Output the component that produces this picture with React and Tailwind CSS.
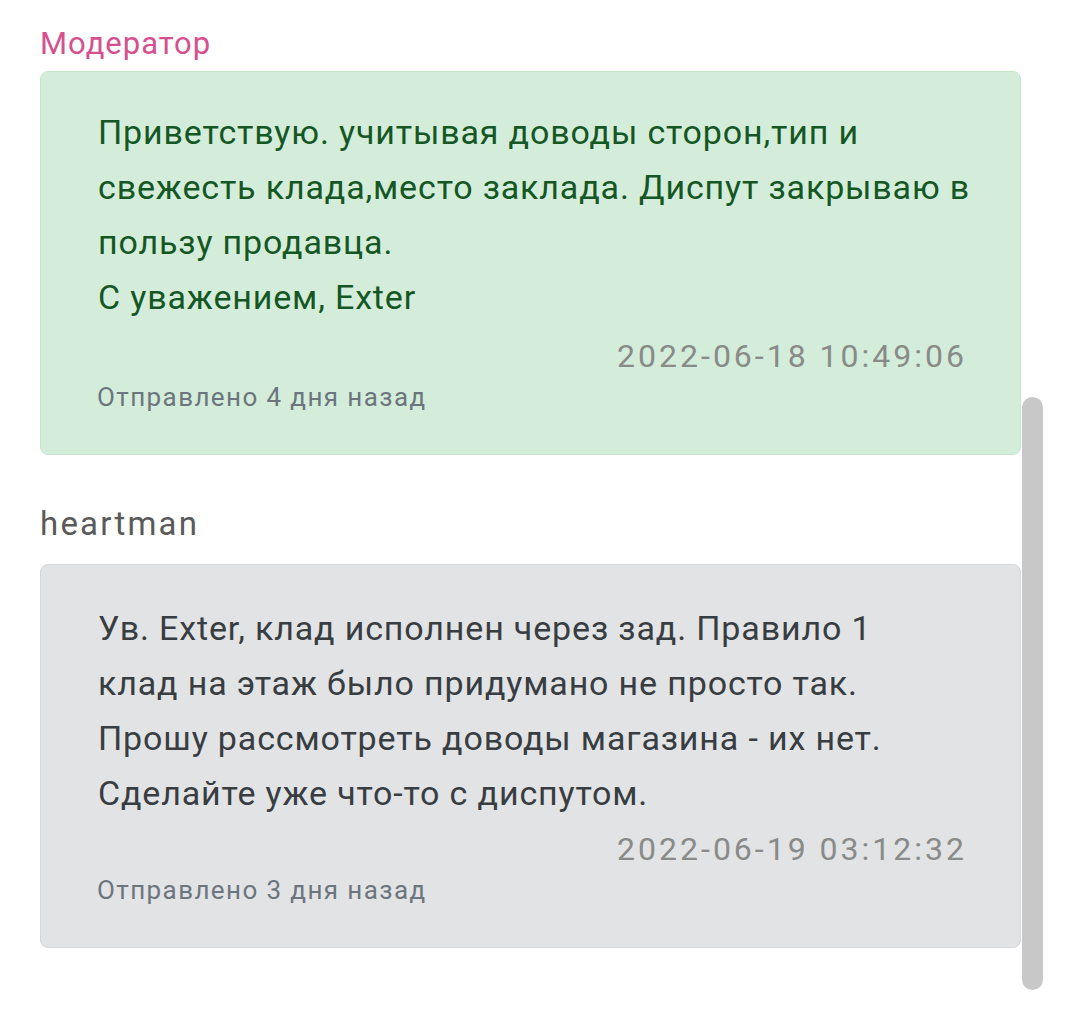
import React from 'react';

const messages = [
  {
    author: "Модератор",
    authorClass: "text-[31px] text-[#d6508f] tracking-[1px]",
    boxClass: "mt-[7px] bg-[#d4edda] border-[#c3e6cb] text-[#155724] pt-[33px]",
    lines: [
      "Приветствую. учитывая доводы сторон,тип и",
      "свежесть клада,место заклада. Диспут закрываю в",
      "пользу продавца.",
      "С уважением, Exter",
    ],
    dateClass: "mt-[6px]",
    date: "2022-06-18 10:49:06",
    sent: "Отправлено 4 дня назад",
  },
  {
    author: "heartman",
    authorClass: "text-[33px] text-[#5a5a5a] tracking-[2.2px]",
    boxClass: "mt-[20px] bg-[#e2e3e5] border-[#d6d8db] text-[#383d41] pt-[36px]",
    lines: [
      "Ув. Exter, клад исполнен через зад. Правило 1",
      "клад на этаж было придумано не просто так.",
      "Прошу рассмотреть доводы магазина - их нет.",
      "Сделайте уже что-то с диспутом.",
    ],
    dateClass: "mt-[3px]",
    date: "2022-06-19 03:12:32",
    sent: "Отправлено 3 дня назад",
  },
];

const App = () => {
  return (
    <div className="relative w-[1080px] h-[1029px] bg-white overflow-hidden font-['Roboto','Noto_Sans',sans-serif]">
      <div className="pl-[40px] pr-[59px] pt-[24px] flex flex-col">
        {messages.map((m, i) => (
          <div key={i} className={i > 0 ? "mt-[49px]" : ""}>
            <div className={`leading-[40px] ${m.authorClass}`}>{m.author}</div>
            <div className={`border rounded-[8px] pl-[57px] pr-[56px] pb-[41px] ${m.boxClass}`}>
              <div className="text-[34px] leading-[55px] tracking-[0.85px] whitespace-nowrap">
                {m.lines.map((l, j) => (
                  <div key={j}>{l}</div>
                ))}
              </div>
              <div className={`text-right text-[32px] leading-[50px] tracking-[3px] -mr-[3px] text-[#888b88] ${m.dateClass}`}>{m.date}</div>
              <div className="text-[26px] leading-[32px] tracking-[1.4px] text-[#6c757d] -ml-px">{m.sent}</div>
            </div>
          </div>
        ))}
      </div>
      <div className="absolute left-[1022px] top-[397px] w-[21px] h-[593px] rounded-full bg-[#c8c8c8]"></div>
    </div>
  );
};

export default App;
